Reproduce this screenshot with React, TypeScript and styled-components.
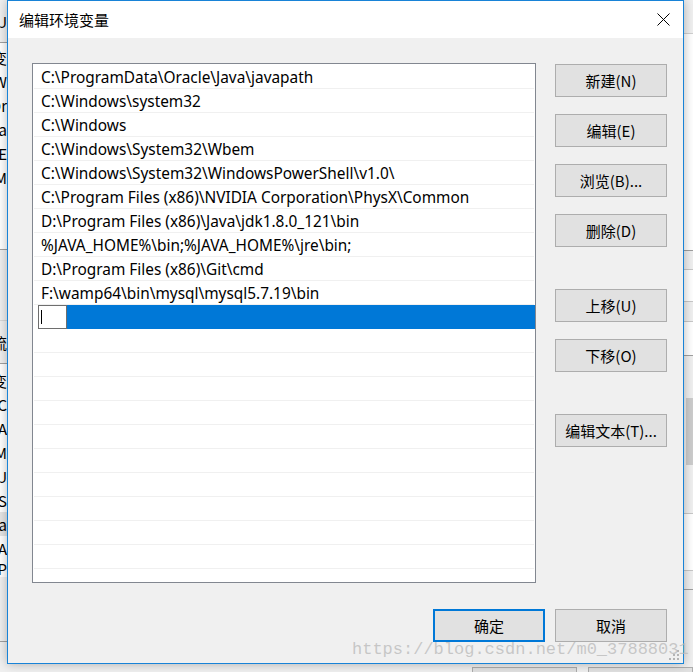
import React from "react";
import styled, { createGlobalStyle } from "styled-components";

const GlobalStyle = createGlobalStyle`
  html, body { margin: 0; padding: 0; background: #f0f0f0; }
  body { width: 693px; height: 672px; overflow: hidden; }
  * { box-sizing: border-box; }
`;

const UI_FONT = `"Noto Sans", "Noto Sans CJK SC", sans-serif`;
const CJK_FONT = `"Noto Sans CJK SC", "Noto Sans", sans-serif`;

const Stage = styled.div`
  position: relative;
  width: 693px;
  height: 672px;
  overflow: hidden;
  background: #f0f0f0;
  display: flex;
  flex-direction: column;
`;

const BackTop = styled.div`
  display: flex;
  justify-content: space-between;
  height: 667px;
`;

const Strip = styled.div<{ $w: number }>`
  width: ${(p) => p.$w}px;
  overflow: hidden;
  display: flex;
  flex-direction: column;
  font: 15px ${CJK_FONT};
  color: #000;
`;

const StripRow = styled.div<{ $h: number; $bg?: string; $line?: string }>`
  height: ${(p) => p.$h}px;
  flex: none;
  background: ${(p) => p.$bg || "#ffffff"};
  border-bottom: ${(p) => (p.$line ? `1px solid ${p.$line}` : "none")};
  display: flex;
  justify-content: flex-end;
  align-items: center;
  white-space: nowrap;
`;

const StripFill = styled.div<{ $bg: string }>`
  flex: 1;
  background: ${(p) => p.$bg};
`;

const Thumb = styled.div`
  height: 67px;
  flex: none;
  background: #cdcdcd;
  margin-left: 2px;
`;

const BackFooter = styled.div`
  display: flex;
  gap: 11px;
  padding-left: 472px;
  height: 5px;
  overflow: hidden;
`;

const BackButton = styled.div`
  width: 111px;
  height: 33px;
  border: 1px solid #adadad;
  background: #e1e1e1;
`;

const Dialog = styled.div`
  position: absolute;
  left: 7px;
  top: 0;
  width: 677px;
  height: 664px;
  border: 1px solid #1883d7;
  background: #f0f0f0;
  box-shadow: 0 0 10px rgba(0, 0, 0, 0.28);
  display: flex;
  flex-direction: column;
`;

const TitleBar = styled.div`
  height: 37px;
  flex: none;
  background: #ffffff;
  display: flex;
  align-items: center;
  justify-content: space-between;
  padding-left: 11px;
`;

const Title = styled.span`
  font: 15px ${CJK_FONT};
  color: #000;
`;

const CloseButton = styled.div`
  width: 40px;
  height: 37px;
  display: flex;
  align-items: center;
  justify-content: center;
`;

const Body = styled.div`
  flex: 1;
  padding: 25px 16px 21px 24px;
  display: flex;
  flex-direction: column;
  gap: 26px;
`;

const TopArea = styled.div`
  display: flex;
  gap: 19px;
  align-items: flex-start;
`;

const ListBox = styled.div`
  width: 504px;
  height: 520px;
  border: 1px solid #828790;
  background: #ffffff;
  overflow: hidden;
  padding-top: 1px;
`;

const Row = styled.div`
  height: 24px;
  margin: 0 1px;
  border-bottom: 1px solid #f0f0f0;
  display: flex;
  align-items: center;
  padding: 2px 0 0 7px;
  font: 15.4px ${UI_FONT};
  color: #000;
  white-space: nowrap;
`;

const SelectedRow = styled.div`
  height: 24px;
  display: flex;
  padding-left: 5px;
`;

const EditCell = styled.div`
  flex: 1;
  display: flex;
  background: #0078d7;
`;

const EditBox = styled.div`
  width: 29px;
  height: 24px;
  border: 1px solid #6e6e6e;
  background: #ffffff;
  display: flex;
  align-items: center;
  padding-left: 2px;
`;

const Caret = styled.div`
  width: 1px;
  height: 14px;
  background: #000;
`;

const ButtonColumn = styled.div`
  display: flex;
  flex-direction: column;
  gap: 17px;
  margin-top: 1px;
`;

const Button = styled.div<{ $extra?: number; $default?: boolean }>`
  width: 112px;
  height: 33px;
  margin-top: ${(p) => p.$extra || 0}px;
  border: ${(p) => (p.$default ? "2px solid #0078d7" : "1px solid #adadad")};
  background: #e1e1e1;
  display: flex;
  align-items: center;
  justify-content: center;
  font: 15px ${CJK_FONT};
  color: #000;
`;

const Footer = styled.div`
  display: flex;
  justify-content: flex-end;
  gap: 10px;
`;

const Grip = styled.svg`
  position: absolute;
  right: 3px;
  bottom: 2px;
`;

const Watermark = styled.div`
  position: absolute;
  left: 352px;
  top: 640px;
  font: 17px "Liberation Mono", monospace;
  color: rgba(185, 185, 185, 0.75);
  white-space: nowrap;
`;

const paths = [
  "C:\\ProgramData\\Oracle\\Java\\javapath",
  "C:\\Windows\\system32",
  "C:\\Windows",
  "C:\\Windows\\System32\\Wbem",
  "C:\\Windows\\System32\\WindowsPowerShell\\v1.0\\",
  "C:\\Program Files (x86)\\NVIDIA Corporation\\PhysX\\Common",
  "D:\\Program Files (x86)\\Java\\jdk1.8.0_121\\bin",
  "%JAVA_HOME%\\bin;%JAVA_HOME%\\jre\\bin;",
  "D:\\Program Files (x86)\\Git\\cmd",
  "F:\\wamp64\\bin\\mysql\\mysql5.7.19\\bin",
];

const sideButtons: { label: string; extra?: number }[] = [
  { label: "新建(N)" },
  { label: "编辑(E)" },
  { label: "浏览(B)..." },
  { label: "删除(D)" },
  { label: "上移(U)", extra: 25 },
  { label: "下移(O)" },
  { label: "编辑文本(T)...", extra: 25 },
];

export default function App() {
  return (
    <>
      <GlobalStyle />
      <Stage>
        <BackTop>
          <Strip $w={7}>
            <StripRow $h={43} $bg="#f0f0f0" $line="#a0a0a0">U</StripRow>
            <StripRow $h={2} />
            <StripRow $h={24}>变</StripRow>
            <StripRow $h={24}>A\W</StripRow>
            <StripRow $h={24}>Or</StripRow>
            <StripRow $h={24}>a</StripRow>
            <StripRow $h={24}>E</StripRow>
            <StripRow $h={24}>M</StripRow>
            <StripRow $h={61} $line="#a0a0a0" />
            <StripRow $h={71} $bg="#f0f0f0" $line="#d8d8d8" />
            <StripRow $h={43} $bg="#f0f0f0" $line="#a0a0a0">流</StripRow>
            <StripRow $h={4} />
            <StripRow $h={24}>变</StripRow>
            <StripRow $h={24}>C</StripRow>
            <StripRow $h={24}>A</StripRow>
            <StripRow $h={24}>M</StripRow>
            <StripRow $h={24}>IU</StripRow>
            <StripRow $h={24}>OS</StripRow>
            <StripRow $h={24} $bg="#e5e5e5">a</StripRow>
            <StripRow $h={24}>A</StripRow>
            <StripRow $h={17}>P</StripRow>
            <StripRow $h={65} $bg="#f0f0f0" $line="#a0a0a0" />
            <StripFill $bg="#f0f0f0" />
          </Strip>
          <Strip $w={9}>
            <StripRow $h={34} $bg="#f0f0f0" $line="#d0d0d0" />
            <StripRow $h={217} $line="#a0a0a0" />
            <StripRow $h={19} $bg="#f0f0f0" $line="#c8c8c8" />
            <StripRow $h={32} $line="#c8c8c8" />
            <StripRow $h={20} $bg="#f0f0f0" $line="#c8c8c8" />
            <StripRow $h={34} $line="#a0a0a0" />
            <StripRow $h={42} $bg="#f0f0f0" />
            <Thumb />
            <StripRow $h={49} $bg="#f0f0f0" $line="#c8c8c8" />
            <StripRow $h={57} $line="#c8c8c8" />
            <StripRow $h={19} $bg="#f0f0f0" $line="#a0a0a0" />
            <StripFill $bg="#f0f0f0" />
          </Strip>
        </BackTop>
        <BackFooter>
          <BackButton />
          <BackButton />
        </BackFooter>

        <Dialog>
          <TitleBar>
            <Title>编辑环境变量</Title>
            <CloseButton>
              <svg width="13" height="13" viewBox="0 0 13 13">
                <path d="M0.5 0.5 L12.5 12.5 M12.5 0.5 L0.5 12.5" stroke="#000" strokeWidth="1" fill="none" />
              </svg>
            </CloseButton>
          </TitleBar>
          <Body>
            <TopArea>
              <ListBox>
                {paths.map((p) => (
                  <Row key={p}>{p}</Row>
                ))}
                <SelectedRow>
                  <EditCell>
                    <EditBox>
                      <Caret />
                    </EditBox>
                  </EditCell>
                </SelectedRow>
                {Array.from({ length: 11 }).map((_, i) => (
                  <Row key={`e${i}`} />
                ))}
              </ListBox>
              <ButtonColumn>
                {sideButtons.map((b) => (
                  <Button key={b.label} $extra={b.extra}>
                    {b.label}
                  </Button>
                ))}
              </ButtonColumn>
            </TopArea>
            <Footer>
              <Button $default>确定</Button>
              <Button>取消</Button>
            </Footer>
          </Body>
          <Grip width="11" height="11" viewBox="0 0 11 11">
            <g fill="#b4b4b4">
              <rect x="8" y="0" width="2" height="2" />
              <rect x="4" y="4" width="2" height="2" />
              <rect x="8" y="4" width="2" height="2" />
              <rect x="0" y="8" width="2" height="2" />
              <rect x="4" y="8" width="2" height="2" />
              <rect x="8" y="8" width="2" height="2" />
            </g>
          </Grip>
        </Dialog>
        <Watermark>https://blog.csdn.net/m0_37888031</Watermark>
      </Stage>
    </>
  );
}
